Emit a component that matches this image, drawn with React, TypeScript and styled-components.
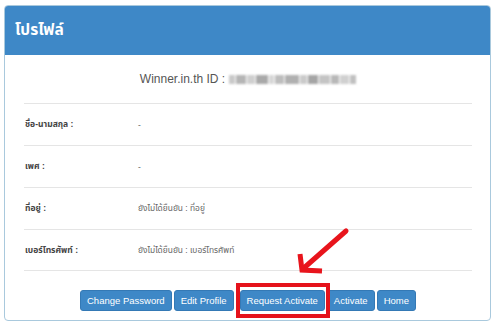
import React from 'react';
import styled, { createGlobalStyle } from 'styled-components';

const GlobalStyle = createGlobalStyle`
  html, body {
    margin: 0;
    padding: 0;
    background: #fff;
  }
  body {
    font-family: "Liberation Sans", "Noto Sans Thai", "Noto Sans", Arial, sans-serif;
  }
`;

const Page = styled.div`
  position: relative;
  width: 500px;
  height: 332px;
  padding: 5px 9px 0 4px;
  box-sizing: border-box;
`;

const Panel = styled.div`
  border: 1px solid #a9c9dd;
  border-radius: 4px;
  overflow: hidden;
`;

const PanelHeader = styled.div`
  height: 49px;
  display: flex;
  align-items: center;
  padding: 0 10px;
  background: #3e88c7;
  color: #fff;
  font-size: 15.5px;
  font-weight: bold;
`;

const PanelBody = styled.div`
  padding: 0 18px 9px 19px;
`;

const IdLine = styled.div`
  height: 48px;
  display: flex;
  align-items: center;
  justify-content: center;
  gap: 4px;
  font-size: 12px;
  color: #555;
`;

const Blurred = styled.span`
  display: inline-flex;
  align-items: center;
  gap: 1px;
  filter: blur(1.2px);
`;

const BlurBlock = styled.span<{ $w: number; $shade: string }>`
  display: inline-block;
  width: ${(p) => p.$w}px;
  height: 9px;
  background: ${(p) => p.$shade};
`;

const InfoRow = styled.div<{ $last?: boolean }>`
  display: grid;
  grid-template-columns: 113px 1fr;
  align-items: center;
  height: 42px;
  box-sizing: border-box;
  padding-left: 1px;
  border-top: 1px solid #e5e5e5;
  border-bottom: ${(p) => (p.$last ? '1px solid #e5e5e5' : 'none')};
`;

const Label = styled.div`
  font-size: 8.5px;
  font-weight: bold;
  color: #444;
`;

const Value = styled.div`
  font-size: 8.4px;
  color: #666;
`;

const Actions = styled.div`
  display: flex;
  justify-content: center;
  align-items: center;
  gap: 2px;
  padding-top: 19px;
`;

const Button = styled.button`
  height: 21px;
  padding: 0 6px;
  border: 1px solid #3479b5;
  border-radius: 3px;
  background: #3e88c7;
  color: #fff;
  font-family: "Liberation Sans", Arial, sans-serif;
  font-size: 9.5px;
  cursor: pointer;
`;

const Highlight = styled.span`
  position: relative;
  display: inline-flex;
  margin: 0 0 0 4px;

  &::after {
    content: '';
    position: absolute;
    left: -4px;
    right: -5px;
    top: -7px;
    bottom: -7px;
    border: 4px solid #e5121b;
    pointer-events: none;
  }
`;

const ArrowLayer = styled.svg`
  position: absolute;
  left: 0;
  top: 0;
  pointer-events: none;
`;

const rows = [
  { label: 'ชื่อ-นามสกุล :', value: '-' },
  { label: 'เพศ :', value: '-' },
  { label: 'ที่อยู่ :', value: 'ยังไม่ได้ยืนยัน : ที่อยู่' },
  { label: 'เบอร์โทรศัพท์ :', value: 'ยังไม่ได้ยืนยัน : เบอร์โทรศัพท์' },
];

const blur: [number, string][] = [
  [6, '#c9c9c9'], [10, '#b5b5b5'], [8, '#cfcfcf'], [12, '#a9a9a9'], [5, '#d6d6d6'],
  [9, '#bdbdbd'], [14, '#b0b0b0'], [7, '#cacaca'], [10, '#a5a5a5'], [11, '#c4c4c4'],
  [8, '#b8b8b8'], [9, '#d0d0d0'], [6, '#c0c0c0'],
];

export default function App() {
  return (
    <Page>
      <GlobalStyle />
      <Panel>
        <PanelHeader>โปรไฟล์</PanelHeader>
        <PanelBody>
          <IdLine>
            <span>Winner.in.th ID :</span>
            <Blurred>
              {blur.map(([w, shade], i) => (
                <BlurBlock key={i} $w={w} $shade={shade} />
              ))}
            </Blurred>
          </IdLine>
          {rows.map((row, i) => (
            <InfoRow key={row.label} $last={i === rows.length - 1}>
              <Label>{row.label}</Label>
              <Value>{row.value}</Value>
            </InfoRow>
          ))}
          <Actions>
            <Button>Change Password</Button>
            <Button>Edit Profile</Button>
            <Highlight>
              <Button>Request Activate</Button>
            </Highlight>
            <Button>Activate</Button>
            <Button>Home</Button>
          </Actions>
        </PanelBody>
      </Panel>
      <ArrowLayer width={500} height={332} viewBox="0 0 500 332">
        <line x1={346} y1={231} x2={305} y2={267} stroke="#e8141c" strokeWidth={5} strokeLinecap="round" />
        <polyline
          points="300,254 302,270 322,271"
          fill="none"
          stroke="#e8141c"
          strokeWidth={5}
          strokeLinejoin="miter"
        />
      </ArrowLayer>
    </Page>
  );
}
